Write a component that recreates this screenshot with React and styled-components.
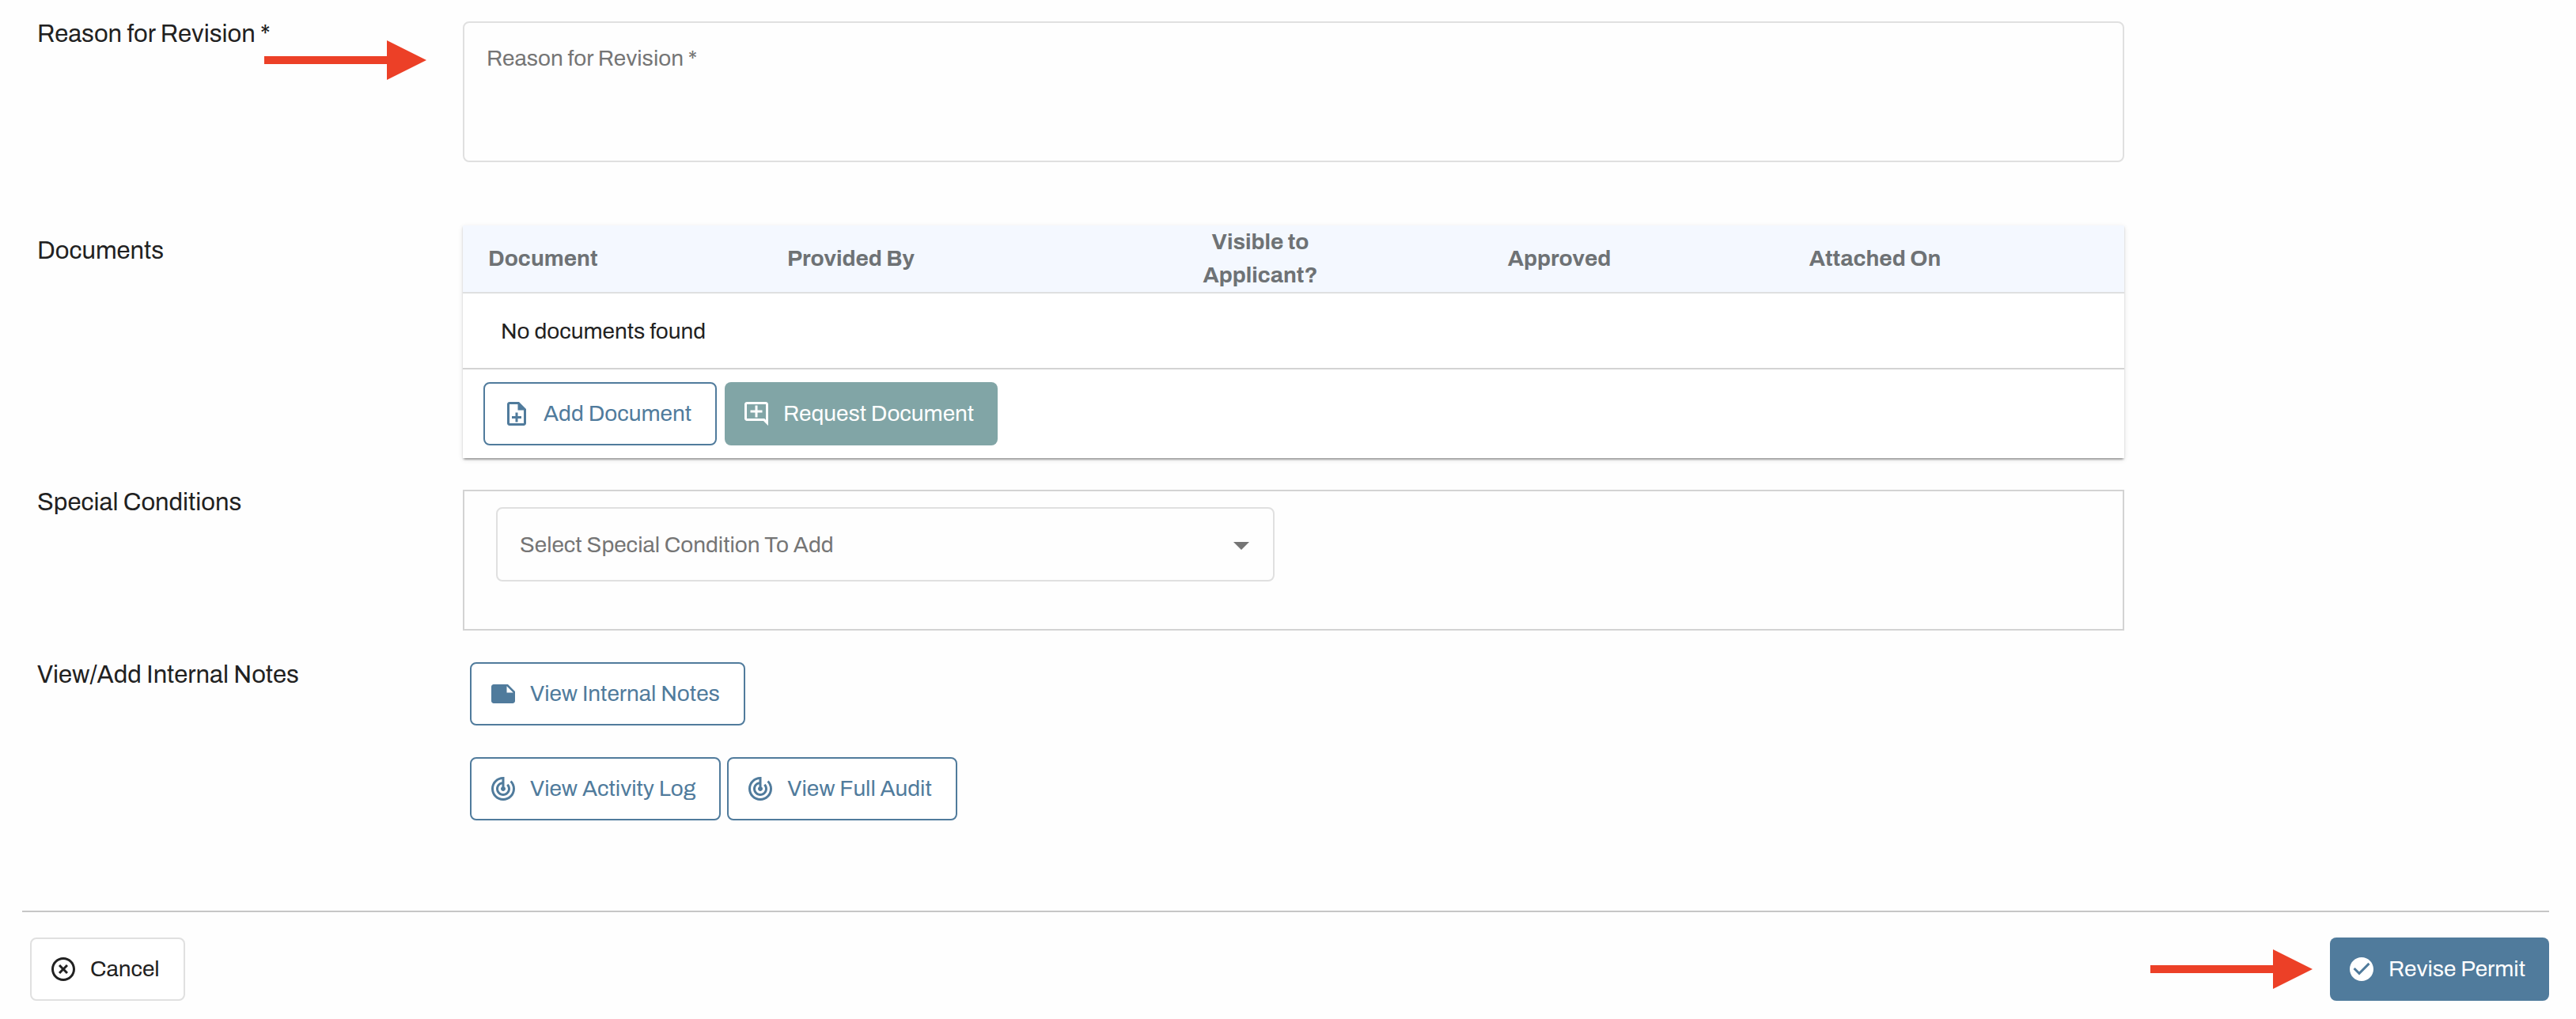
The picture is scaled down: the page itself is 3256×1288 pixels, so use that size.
import React, { useState } from 'react';
import styled, { createGlobalStyle, css } from 'styled-components';
import {
  MdArrowDropDown,
  MdCheckCircle,
  MdHighlightOff,
  MdNote,
  MdOutlineAddComment,
  MdOutlineNoteAdd,
  MdTrackChanges
} from 'react-icons/md';

const GlobalStyle = createGlobalStyle`
  *,
  *::before,
  *::after {
    box-sizing: border-box;
  }

  body {
    margin: 0;
    background-color: #fefefe;
    color: #212121;
    font-family: Archivo, 'Liberation Sans', Arial, sans-serif;
    font-size: 28px;
    line-height: 42px;
  }

  button,
  select,
  textarea {
    font-family: inherit;
    font-size: inherit;
  }
`;

const Page = styled.form`
  padding: 27px 34px 23px 28px;
`;

const Fields = styled.div`
  display: flex;
  flex-direction: column;
  gap: 40px;
  padding-left: 19px;
  margin-bottom: 114px;
`;

const Row = styled.div`
  position: relative;
  display: grid;
  grid-template-columns: 538fr 2100fr 537fr;
  align-items: start;
  padding-bottom: ${({ $spaced }) => ($spaced ? '40px' : '0')};
`;

const labelStyles = css`
  font-size: 31px;
  line-height: 32px;
`;

const Label = styled.label`
  ${labelStyles}
`;

const Heading = styled.h2`
  ${labelStyles}
  margin: 0;
  padding-top: ${({ $inset }) => ($inset ? '16px' : '0')};
  font-weight: normal;
`;

const TextArea = styled.textarea`
  display: block;
  width: 100%;
  height: 178px;
  padding: 25px 28px;
  border: 2px solid #e0e0e0;
  border-radius: 8px;
  background-color: transparent;
  color: #212121;
  line-height: 40px;
  resize: none;

  &::placeholder {
    color: #757575;
    opacity: 1;
  }
`;

const Paper = styled.div`
  background-color: #fff;
  box-shadow: 0 4px 2px -2px rgba(0, 0, 0, 0.2), 0 2px 2px rgba(0, 0, 0, 0.14), 0 2px 6px rgba(0, 0, 0, 0.12);
`;

const Table = styled.table`
  width: 100%;
  table-layout: fixed;
  border-collapse: separate;
  border-spacing: 0;
`;

const HeadCell = styled.th`
  width: ${({ $width }) => $width};
  padding: 0 32px;
  border-bottom: 2px solid #dfe0e1;
  background-color: #f4f8ff;
  color: #6e7275;
  font-weight: bold;
  text-align: ${({ $align }) => $align || 'center'};
`;

const EmptyCell = styled.td`
  padding: 27px 48px 25px;
  border-bottom: 2px solid #d3d3d3;
`;

const ButtonGroup = styled.div`
  display: flex;
  gap: ${({ $gap }) => $gap || '8px'};
  padding: ${({ $padding }) => $padding || '0 9px'};
`;

const Button = styled.button`
  display: inline-flex;
  align-items: center;
  gap: 16px;
  height: 80px;
  padding: 0 30px 0 22px;
  border: 2px solid #507b9c;
  border-radius: 8px;
  background-color: #fff;
  color: #507b9c;
  line-height: 42px;
  white-space: nowrap;
  cursor: pointer;

  > svg {
    flex: none;
    width: 36px;
    height: 36px;
  }
`;

const NeutralButton = styled(Button)`
  border-color: #e0e0e0;
  color: #212121;
`;

const FilledButton = styled(Button)`
  border: none;
  background-color: ${({ $color }) => $color};
  color: #fff;
`;

const Conditions = styled.div`
  padding: 20px 40px 60px;
  border: 2px solid #d3d3d3;
`;

const SelectWrapper = styled.div`
  position: relative;
  width: calc(50% - 24px);

  > svg {
    position: absolute;
    top: 24px;
    right: 18px;
    width: 48px;
    height: 48px;
    color: #757575;
    pointer-events: none;
  }
`;

const Select = styled.select`
  display: block;
  width: 100%;
  height: 94px;
  padding: 0 80px 0 28px;
  border: 2px solid #e0e0e0;
  border-radius: 8px;
  background-color: transparent;
  color: #757575;
  appearance: none;
`;

const Footer = styled.footer`
  display: flex;
  align-items: center;
  justify-content: space-between;
  padding: 32px 0 0 10px;
  border-top: 2px solid #c6c6c6;
`;

const FooterActions = styled.div`
  display: flex;
  align-items: center;
  gap: 22px;
`;

const Arrow = styled.svg`
  width: 205px;
  height: 50px;
  fill: #ec4027;
`;

const FieldArrow = styled(Arrow)`
  position: absolute;
  top: 24px;
  left: 287px;
`;

const arrowShape = <path d="M0 20H155V0L205 25L155 50V30H0Z" />;

const columns = [
  { title: 'Document', width: '18%', align: 'left' },
  { title: 'Provided By', width: '21%', align: 'left' },
  { title: 'Visible to Applicant?', width: '18%' },
  { title: 'Approved', width: '18%' },
  { title: 'Attached On', width: '20%' }
];

const DocumentsTable = () => (
  <Paper>
    <Table aria-labelledby="documents">
      <thead>
        <tr>
          {columns.map(({ title, width, align }) => (
            <HeadCell key={title} scope="col" $width={width} $align={align}>
              {title === 'Visible to Applicant?' ? (
                <>
                  Visible to
                  <br />
                  Applicant?
                </>
              ) : (
                title
              )}
            </HeadCell>
          ))}
          <HeadCell as="td" $width="5%" />
        </tr>
      </thead>
      <tbody>
        <tr>
          <EmptyCell colSpan={columns.length + 1}>No documents found</EmptyCell>
        </tr>
      </tbody>
    </Table>
    <ButtonGroup $gap="10px" $padding="16px 26px">
      <Button type="button">
        <MdOutlineNoteAdd />
        Add Document
      </Button>
      <FilledButton type="button" $color="#81a5a6">
        <MdOutlineAddComment />
        Request Document
      </FilledButton>
    </ButtonGroup>
  </Paper>
);

const App = () => {
  const [reason, setReason] = useState('');

  return (
    <>
      <GlobalStyle />
      <Page onSubmit={event => event.preventDefault()}>
        <Fields>
          <Row $spaced>
            <Label htmlFor="reason">Reason for Revision *</Label>
            <TextArea
              id="reason"
              name="reason"
              placeholder="Reason for Revision *"
              value={reason}
              onChange={event => setReason(event.target.value)}
            />
            <FieldArrow viewBox="0 0 205 50" aria-hidden="true">
              {arrowShape}
            </FieldArrow>
          </Row>
          <Row>
            <Heading id="documents" $inset>
              Documents
            </Heading>
            <DocumentsTable />
          </Row>
          <Row>
            <Label htmlFor="condition">Special Conditions</Label>
            <Conditions>
              <SelectWrapper>
                <Select id="condition" name="condition">
                  <option>Select Special Condition To Add</option>
                </Select>
                <MdArrowDropDown />
              </SelectWrapper>
            </Conditions>
          </Row>
          <Row>
            <Heading>View/Add Internal Notes</Heading>
            <ButtonGroup>
              <Button type="button">
                <MdNote />
                View Internal Notes
              </Button>
            </ButtonGroup>
          </Row>
          <Row>
            <span />
            <ButtonGroup>
              <Button type="button">
                <MdTrackChanges />
                View Activity Log
              </Button>
              <Button type="button">
                <MdTrackChanges />
                View Full Audit
              </Button>
            </ButtonGroup>
          </Row>
        </Fields>
        <Footer>
          <NeutralButton type="button">
            <MdHighlightOff />
            Cancel
          </NeutralButton>
          <FooterActions>
            <Arrow viewBox="0 0 205 50" aria-hidden="true">
              {arrowShape}
            </Arrow>
            <FilledButton type="submit" $color="#507b9c">
              <MdCheckCircle />
              Revise Permit
            </FilledButton>
          </FooterActions>
        </Footer>
      </Page>
    </>
  );
};

export default App;
